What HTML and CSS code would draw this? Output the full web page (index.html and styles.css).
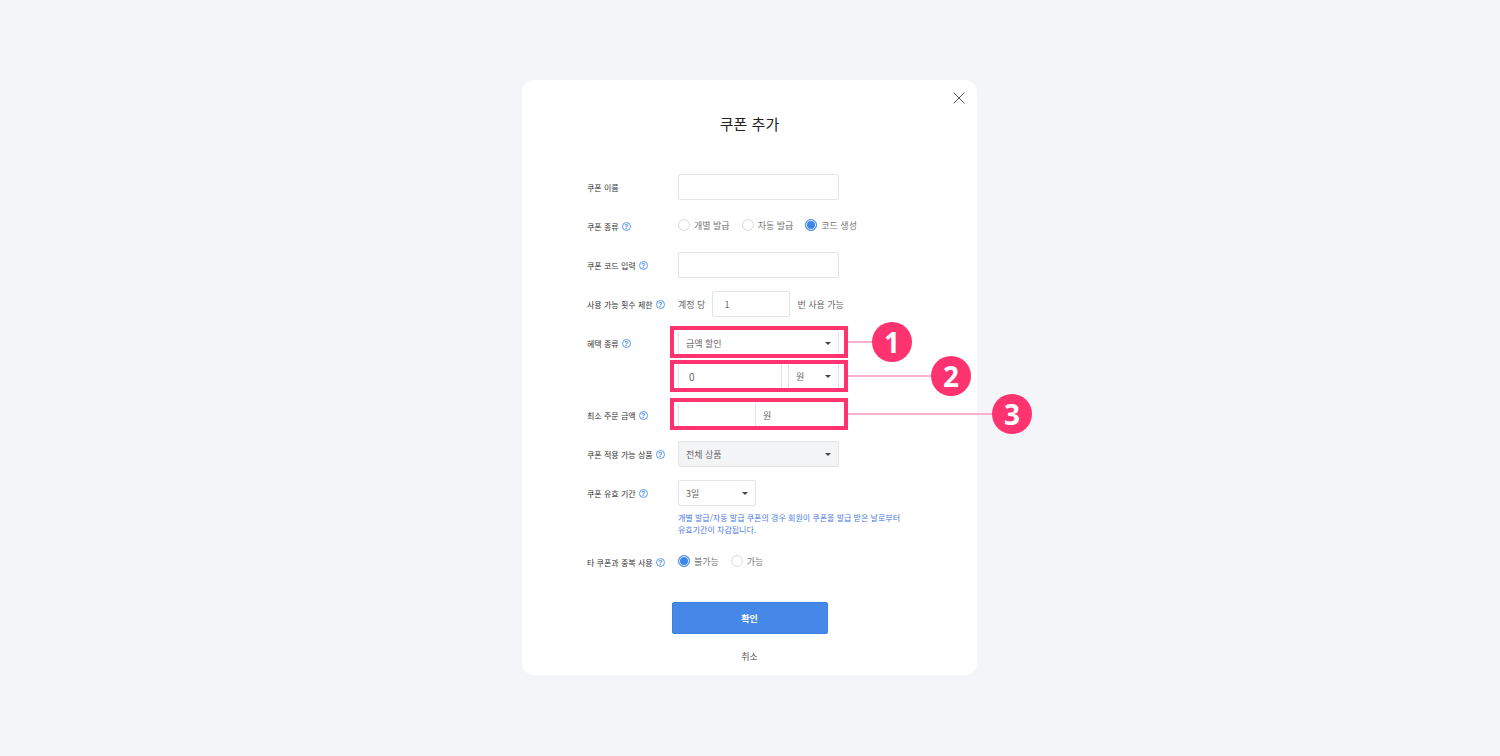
FILE: index.html
```html
<!DOCTYPE html>
<html lang="ko">
<head>
<meta charset="utf-8">
<title>쿠폰 추가</title>
<link rel="stylesheet" href="styles.css">
</head>
<body>
<main class="page">
<form class="dialog">
  <button class="close" type="button" aria-label="닫기">
    <svg viewBox="0 0 12 12" width="12" height="12"><path d="M.6.6 11.4 11.4M11.4.6.6 11.4" fill="none" stroke="#555" stroke-width="1"/></svg>
  </button>
  <h1 class="title">쿠폰 추가</h1>
  <div class="rows">
    <div class="row">
      <label class="name" for="coupon-name">쿠폰 이름</label>
      <div class="control"><input class="box" id="coupon-name" type="text"></div>
    </div>
    <div class="row">
      <span class="name" id="type-label">쿠폰 종류<span class="help">?</span></span>
      <div class="control choices" role="radiogroup" aria-labelledby="type-label">
        <label class="choice"><input class="radio" type="radio" name="type">개별 발급</label>
        <label class="choice"><input class="radio" type="radio" name="type">자동 발급</label>
        <label class="choice"><input class="radio" type="radio" name="type" checked>코드 생성</label>
      </div>
    </div>
    <div class="row">
      <label class="name" for="coupon-code">쿠폰 코드 입력<span class="help">?</span></label>
      <div class="control"><input class="box" id="coupon-code" type="text"></div>
    </div>
    <div class="row">
      <label class="name" for="limit">사용 가능 횟수 제한<span class="help">?</span></label>
      <div class="control inline"><span>계정 당</span><input class="box short" id="limit" type="text" value="1"><span>번 사용 가능</span></div>
    </div>
    <div class="row">
      <label class="name" for="benefit">혜택 종류<span class="help">?</span></label>
      <div class="stack">
        <div class="control marked first">
          <div class="select"><select class="box" id="benefit"><option>금액 할인</option></select></div>
          <div class="mark"><span class="line"></span><span class="badge">1</span></div>
        </div>
        <div class="control marked second">
          <div class="pair">
            <input class="box amount" type="text" value="0" aria-label="할인 금액">
            <div class="select unit"><select class="box" aria-label="단위"><option>원</option></select></div>
          </div>
          <div class="mark"><span class="line"></span><span class="badge">2</span></div>
        </div>
      </div>
    </div>
    <div class="row">
      <label class="name" for="minimum">최소 주문 금액<span class="help">?</span></label>
      <div class="control inline marked third">
        <input class="box short" id="minimum" type="text"><span>원</span>
        <div class="mark"><span class="line"></span><span class="badge">3</span></div>
      </div>
    </div>
    <div class="row">
      <label class="name" for="products">쿠폰 적용 가능 상품<span class="help">?</span></label>
      <div class="control"><div class="select"><select class="box shaded" id="products"><option>전체 상품</option></select></div></div>
    </div>
    <div class="row">
      <label class="name" for="period">쿠폰 유효 기간<span class="help">?</span></label>
      <div>
        <div class="control"><div class="select short"><select class="box" id="period"><option>3일</option></select></div></div>
        <p class="note">개별 발급/자동 발급 쿠폰의 경우 회원이 쿠폰을 발급 받은 날로부터<br>유효기간이 차감됩니다.</p>
      </div>
    </div>
    <div class="row">
      <span class="name" id="overlap-label">타 쿠폰과 중복 사용<span class="help">?</span></span>
      <div class="control choices" role="radiogroup" aria-labelledby="overlap-label">
        <label class="choice"><input class="radio" type="radio" name="overlap" checked>불가능</label>
        <label class="choice"><input class="radio" type="radio" name="overlap">가능</label>
      </div>
    </div>
  </div>
  <div class="actions">
    <button class="confirm" type="submit">확인</button>
    <button class="cancel" type="button">취소</button>
  </div>
</form>
</main>
</body>
</html>
```
FILE: styles.css
```css
*, *::before, *::after { box-sizing: border-box; }
body {
  margin: 0;
  background: #f3f5f9;
  color: #333;
  font: 9px/13px "Noto Sans CJK KR", sans-serif;
}
button, input, select { font: inherit; color: inherit; }
.page {
  display: flex;
  align-items: center;
  justify-content: center;
  min-height: 100vh;
  padding: 0 1px 1px 0;
}
.dialog {
  position: relative;
  width: 100%;
  max-width: 455px;
  padding: 32px 65px 12px;
  border-radius: 12px;
  background: #fff;
}
.close {
  position: absolute;
  top: 12px;
  right: 12px;
  display: flex;
  padding: 0;
  border: 0;
  background: none;
}
.title {
  margin: 0 0 38px;
  color: #222;
  font-size: 15px;
  font-weight: 400;
  line-height: 24px;
  text-align: center;
}
.rows { display: grid; gap: 13px; }
.row { display: grid; grid-template-columns: 91px minmax(0, 1fr); }
.name {
  display: flex;
  align-items: center;
  gap: 3px;
  height: 26px;
  font-size: 8px;
  white-space: nowrap;
}
.help {
  display: flex;
  align-items: center;
  justify-content: center;
  width: 9px;
  height: 9px;
  border: 1px solid #5c9bf5;
  border-radius: 50%;
  color: #3f86f0;
  font: 700 7px/7px "Liberation Sans", sans-serif;
}
.control { height: 26px; color: #666; }
.box {
  width: 161px;
  height: 26px;
  padding: 0 11px;
  border: 1px solid #e3e4e6;
  border-radius: 2px;
  background: #fff;
  outline: 0;
}
.inline { display: flex; align-items: center; gap: 7px; white-space: nowrap; }
.short { width: 78px; }
.choices { display: flex; align-items: center; gap: 12px; padding-bottom: 2px; }
.choice { display: flex; align-items: center; gap: 4px; color: #777; white-space: nowrap; }
.radio {
  appearance: none;
  width: 12px;
  height: 12px;
  margin: 0;
  border: 1px solid #ddd;
  border-radius: 50%;
  background: #fff;
}
.radio:checked {
  border-color: #4589e8;
  background: #3e85e8;
  box-shadow: inset 0 0 0 1px #fff;
}
.stack { display: grid; gap: 7px; }
.select { position: relative; width: 161px; }
.select .box { display: block; width: 100%; padding: 0 7px; appearance: none; }
.select::after {
  content: "";
  position: absolute;
  top: 12px;
  right: 8px;
  border: 3px solid transparent;
  border-top-color: #444;
  border-bottom: 0;
}
.select.short { width: 78px; }
.select .shaded { background: #f3f4f5; }
.pair { display: flex; gap: 6px; width: 161px; }
.amount { flex: 1; min-width: 0; padding: 0 10px; font-size: 10px; }
.select.unit { width: 51px; }
.note { margin: 6px 0 0; color: #4a7be0; font-size: 8px; line-height: 12px; white-space: nowrap; }

/* Numbered callouts drawn over the fields */
.marked { position: relative; }
.marked .box { border-top-color: #fff; border-bottom-color: #fff; }
.mark {
  position: absolute;
  top: -8px;
  left: -8px;
  display: flex;
  align-items: center;
}
.second .mark { top: -7px; }
.mark::before {
  content: "";
  width: 178px;
  height: 32px;
  border: 4px solid #ff336f;
}
.line { width: 24px; height: 2px; background: #ffb1cb; }
.second .line { width: 83px; }
.third .line { width: 144px; }
.badge {
  width: 40px;
  height: 40px;
  border-radius: 50%;
  background: #ff336f;
  color: #fff;
  font: 700 28px/40px "Open Sans", sans-serif;
  text-align: center;
}
.actions { display: flex; flex-direction: column; align-items: center; gap: 16px; margin-top: 27px; }
.confirm {
  width: 156px;
  height: 32px;
  border: 1px solid #3b80e5;
  border-radius: 2px;
  background: #4688e7;
  color: #fff;
  font-weight: 700;
}
.cancel { padding: 0; border: 0; background: none; color: #555; }
```
